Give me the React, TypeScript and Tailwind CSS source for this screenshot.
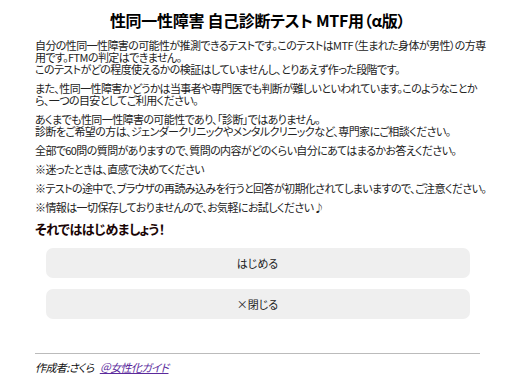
export default function App() {
  const font = "font-['Noto_Sans_CJK_JP','Noto_Sans',sans-serif]";
  return (
    <div className={`w-[512px] h-[384px] bg-white text-[#111] ${font} [font-feature-settings:'palt']`}>
      <div className="ml-[35px] w-[445px] pt-[10px]">
        <h1 className="text-center text-[16px] leading-[20px] font-bold text-black tracking-[-0.3px]">
          性同一性障害 自己診断テスト MTF用（α版）
        </h1>
        <div className="mt-[9px] text-[11px] leading-[12px] text-[#222] whitespace-nowrap tracking-[-0.6px]">
          <p className="mb-[7px]">
            自分の性同一性障害の可能性が推測できるテストです。このテストはMTF（生まれた身体が男性）の方専<br />
            用です。FTMの判定はできません。<br />
            このテストがどの程度使えるかの検証はしていませんし、とりあえず作った段階です。
          </p>
          <p className="mb-[7px]">
            また、性同一性障害かどうかは当事者や専門医でも判断が難しいといわれています。このようなことか<br />
            ら、一つの目安としてご利用ください。
          </p>
          <p className="mb-[7px]">
            あくまでも性同一性障害の可能性であり、「診断」ではありません。<br />
            診断をご希望の方は、ジェンダークリニックやメンタルクリニックなど、専門家にご相談ください。
          </p>
          <p className="mb-[7px]">全部で60問の質問がありますので、質問の内容がどのくらい自分にあてはまるかお答えください。</p>
          <p className="mb-[7px]">※迷ったときは、直感で決めてください</p>
          <p className="mb-[7px]">※テストの途中で、ブラウザの再読み込みを行うと回答が初期化されてしまいますので、ご注意ください。</p>
          <p>※情報は一切保存しておりませんので、お気軽にお試しください♪</p>
        </div>
        <h2 className="mt-[8px] text-[13px] leading-[16px] font-bold text-[#1a0505] tracking-[-0.5px]">それでははじめましょう！</h2>
        <div className="mt-[11px] flex flex-col items-center gap-[11px]">
          <button className="w-[424px] h-[30px] rounded-[7px] bg-[#efefef] text-[11px] text-[#222]">はじめる</button>
          <button className="w-[424px] h-[30px] rounded-[7px] bg-[#efefef] text-[11px] text-[#222]">×閉じる</button>
        </div>
        <hr className="mt-[34px] border-0 border-t border-[#bbb]" />
        <div className="mt-[6px] text-[11px] leading-[14px] italic text-[#111] tracking-[-0.6px]">
          作成者:さくら<a href="#" className="ml-[6px] text-[#5b2a9c] underline">＠女性化ガイド</a>
        </div>
      </div>
    </div>
  );
}
